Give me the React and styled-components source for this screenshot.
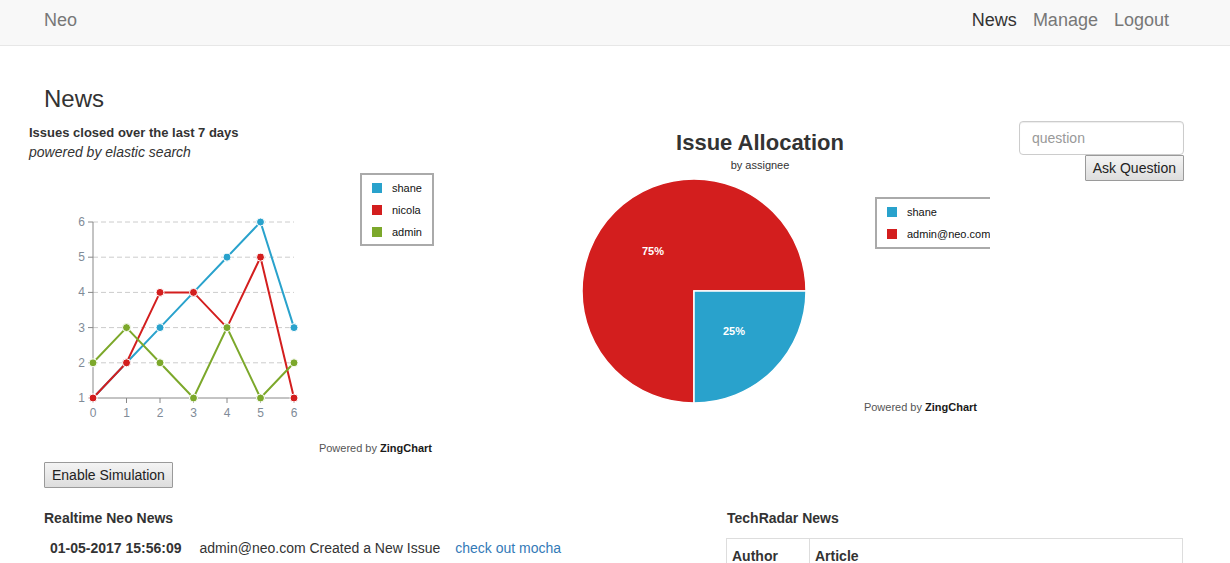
import React from 'react';
import styled, { createGlobalStyle } from 'styled-components';

const GlobalStyle = createGlobalStyle`
  body {
    margin: 0;
    background: #fff;
    font-family: "Liberation Sans", Arial, Helvetica, sans-serif;
    font-size: 14px;
    color: #333;
  }
`;

// colours used by both charts
const BLUE = '#29a2cc';
const RED = '#d31e1e';
const GREEN = '#7ca82b';

const series = [
  { name: 'shane', color: BLUE, values: [1, 2, 3, 4, 5, 6, 3] },
  { name: 'nicola', color: RED, values: [1, 2, 4, 4, 3, 5, 1] },
  { name: 'admin', color: GREEN, values: [2, 3, 2, 1, 3, 1, 2] },
];

const Navbar = styled.nav`
  height: 45px;
  background: #f8f8f8;
  border-bottom: 1px solid #e7e7e7;
  display: flex;
  align-items: center;
  justify-content: space-between;
  padding: 0 61px 0 44px;
  font-size: 18px;
`;

const Brand = styled.a`
  color: #777;
  text-decoration: none;
  margin-top: -5px;
`;

const NavLinks = styled.div`
  display: flex;
  gap: 16px;
  margin-top: -5px;
`;

const NavLink = styled.a`
  color: ${(p) => (p.$active ? '#333' : '#777')};
  text-decoration: none;
`;

const Main = styled.main`
  padding: 0 45px;
`;

const PageTitle = styled.h3`
  margin: 40px 0 0 -1px;
  font-size: 24px;
  font-weight: 500;
  line-height: 26px;
  color: #333;
`;

const ChartsRow = styled.div`
  display: flex;
  align-items: flex-start;
  margin-top: 4px;
`;

const LineChartSvg = styled.svg`
  display: block;
  margin-left: -25px;
  flex: none;
`;

const PieChartSvg = styled.svg`
  display: block;
  margin: -1px 0 0 120px;
  flex: none;
`;

const AskForm = styled.form`
  margin-left: auto;
  margin-top: 5px;
  margin-right: 1px;
  display: flex;
  flex-direction: column;
  align-items: flex-end;
  width: 165px;
`;

const QuestionInput = styled.input`
  box-sizing: border-box;
  width: 165px;
  height: 34px;
  padding: 6px 12px;
  border: 1px solid #ccc;
  border-radius: 4px;
  font-family: inherit;
  font-size: 14px;
  color: #555;
  box-shadow: inset 0 1px 1px rgba(0, 0, 0, 0.075);
  &::placeholder {
    color: #999;
  }
`;

const Button = styled.button`
  box-sizing: border-box;
  height: 26px;
  padding: 1px 7px;
  border: 1px solid #9a9a9a;
  border-radius: 1px;
  background: linear-gradient(#f4f4f4, #dddddd);
  font-family: inherit;
  font-size: 14px;
  color: #222;
  cursor: pointer;
`;

const SimButton = styled(Button)`
  margin-top: 1px;
  margin-left: -1px;
`;

const NewsGrid = styled.div`
  display: grid;
  grid-template-columns: 681px 457px;
  margin-top: 20px;
`;

const SectionTitle = styled.h5`
  margin: 0 0 10px ${(p) => (p.$shift ? '1px' : '-1px')};
  font-size: 14px;
  line-height: 20px;
  font-weight: 700;
  color: #333;
`;

const FeedRow = styled.div`
  display: flex;
  gap: 12px;
  padding-left: 5px;
  line-height: 20px;
`;

const Stamp = styled.strong`
  margin-right: 6px;
`;

const FeedLink = styled.a`
  margin-left: 3px;
  color: #337ab7;
  text-decoration: none;
`;

const Table = styled.table`
  width: 100%;
  border-collapse: collapse;
  border: 1px solid #ddd;
`;

const Th = styled.th`
  text-align: left;
  padding: 7px 5px;
  line-height: 20px;
  border: 1px solid #ddd;
  border-bottom-width: 2px;
  font-weight: 700;
  width: ${(p) => p.$w || 'auto'};
`;

const LineChart = () => {
  const x0 = 73;
  const dx = 33.5;
  const yBase = 282;
  const dy = 35.2;
  const px = (i) => x0 + i * dx;
  const py = (v) => yBase - (v - 1) * dy;
  const ticks = [1, 2, 3, 4, 5, 6];
  const xs = [0, 1, 2, 3, 4, 5, 6];

  return (
    <LineChartSvg width="420" height="345" viewBox="0 0 420 345">
      <text x="9" y="20.5" fontSize="13" fontWeight="700" fill="#333">
        Issues closed over the last 7 days
      </text>
      <text x="9" y="41" fontSize="14" fontStyle="italic" fill="#333">
        powered by elastic search
      </text>

      {ticks.slice(1).map((t) => (
        <line key={t} x1={x0} x2="274" y1={py(t)} y2={py(t)} stroke="#ccc" strokeDasharray="5 3" />
      ))}
      <line x1={x0} x2={x0} y1={py(6)} y2={yBase} stroke="#888" />
      <line x1={x0} x2="274" y1={yBase} y2={yBase} stroke="#888" />
      {ticks.map((t) => (
        <g key={t}>
          <line x1={x0 - 5} x2={x0} y1={py(t)} y2={py(t)} stroke="#888" />
          <text x={x0 - 8} y={py(t) + 4} fontSize="12" textAnchor="end" fill="#7f8b98">
            {t}
          </text>
        </g>
      ))}
      {xs.map((i) => (
        <g key={i}>
          <line x1={px(i)} x2={px(i)} y1={yBase} y2={yBase + 5} stroke="#888" />
          <text x={px(i)} y={yBase + 19} fontSize="12" textAnchor="middle" fill="#7f8b98">
            {i}
          </text>
        </g>
      ))}

      {series.map((s) => (
        <g key={s.name}>
          <polyline
            points={s.values.map((v, i) => `${px(i)},${py(v)}`).join(' ')}
            fill="none"
            stroke={s.color}
            strokeWidth="2"
          />
          {s.values.map((v, i) => (
            <circle key={i} cx={px(i)} cy={py(v)} r="4" fill={s.color} stroke="#fff" strokeWidth="1" />
          ))}
        </g>
      ))}

      <rect x="341" y="58" width="72" height="71" fill="#fff" stroke="#aaa" strokeWidth="2" />
      {series.map((s, i) => (
        <g key={s.name}>
          <rect x="352" y={67 + i * 22} width="10" height="10" fill={s.color} />
          <text x="372" y={76 + i * 22} fontSize="11" fill="#111">
            {s.name}
          </text>
        </g>
      ))}

      <text x="412" y="336" fontSize="11" textAnchor="end" fill="#555">
        Powered by <tspan fontWeight="700" fill="#1a1a1a">ZingChart</tspan>
      </text>
    </LineChartSvg>
  );
};

const PieChart = () => {
  const cx = 134;
  const cy = 176;
  const r = 112;
  const legend = [
    { name: 'shane', color: BLUE },
    { name: 'admin@neo.com', color: RED },
  ];

  return (
    <PieChartSvg width="430" height="305" viewBox="0 0 430 305">
      <text x="200" y="35" fontSize="22" fontWeight="700" textAnchor="middle" fill="#333">
        Issue Allocation
      </text>
      <text x="200" y="54" fontSize="11" textAnchor="middle" fill="#333">
        by assignee
      </text>

      <path
        d={`M${cx},${cy} L${cx},${cy + r} A${r},${r} 0 1 1 ${cx + r},${cy} Z`}
        fill={RED}
        stroke="#fff"
        strokeWidth="1.5"
      />
      <path
        d={`M${cx},${cy} L${cx + r},${cy} A${r},${r} 0 0 1 ${cx},${cy + r} Z`}
        fill={BLUE}
        stroke="#fff"
        strokeWidth="1.5"
      />
      <text x="93" y="140" fontSize="11" fontWeight="700" textAnchor="middle" fill="#fff">
        75%
      </text>
      <text x="174" y="220" fontSize="11" fontWeight="700" textAnchor="middle" fill="#fff">
        25%
      </text>

      <rect x="316" y="83" width="140" height="50" fill="#fff" stroke="#aaa" strokeWidth="2" />
      {legend.map((l, i) => (
        <g key={l.name}>
          <rect x="327" y={92 + i * 22} width="10" height="10" fill={l.color} />
          <text x="347" y={101 + i * 22} fontSize="11" fill="#111">
            {l.name}
          </text>
        </g>
      ))}

      <text x="417" y="296" fontSize="11" textAnchor="end" fill="#555">
        Powered by <tspan fontWeight="700" fill="#1a1a1a">ZingChart</tspan>
      </text>
    </PieChartSvg>
  );
};

const App = () => {
  return (
    <>
      <GlobalStyle />
      <Navbar>
        <Brand href="#">Neo</Brand>
        <NavLinks>
          <NavLink href="#" $active>News</NavLink>
          <NavLink href="#">Manage</NavLink>
          <NavLink href="#">Logout</NavLink>
        </NavLinks>
      </Navbar>
      <Main>
        <PageTitle>News</PageTitle>
        <ChartsRow>
          <LineChart />
          <PieChart />
          <AskForm onSubmit={(e) => e.preventDefault()}>
            <QuestionInput placeholder="question" />
            <Button type="submit">Ask Question</Button>
          </AskForm>
        </ChartsRow>
        <SimButton>Enable Simulation</SimButton>
        <NewsGrid>
          <div>
            <SectionTitle>Realtime Neo News</SectionTitle>
            <FeedRow>
              <Stamp>01-05-2017 15:56:09</Stamp>
              <span>admin@neo.com Created a New Issue</span>
              <FeedLink href="#">check out mocha</FeedLink>
            </FeedRow>
          </div>
          <div>
            <SectionTitle $shift>TechRadar News</SectionTitle>
            <Table>
              <thead>
                <tr>
                  <Th $w="72px">Author</Th>
                  <Th>Article</Th>
                </tr>
              </thead>
            </Table>
          </div>
        </NewsGrid>
      </Main>
    </>
  );
};

export default App;
